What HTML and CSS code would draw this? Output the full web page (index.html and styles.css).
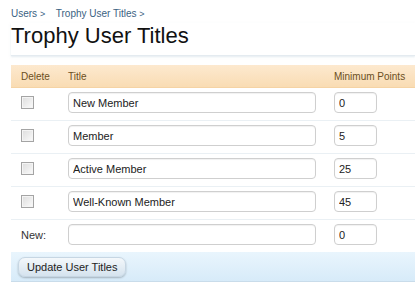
FILE: index.html
```html
<!DOCTYPE html>
<html lang="en">
<head>
    <meta charset="UTF-8">
    <meta name="viewport" content="width=device-width, initial-scale=1.0">
    <title>Trophy User Titles</title>
    <link rel="stylesheet" href="styles.css">
</head>
<body>
    <div class="page">
        <div class="breadcrumb">
            <a href="#">Users</a> <span class="sep">&gt;</span>
            <a href="#" class="crumb-last">Trophy User Titles</a> <span class="sep">&gt;</span>
        </div>
        <h1 class="title-bar">Trophy User Titles</h1>

        <form class="titles-form">
            <table class="data-table">
                <thead>
                    <tr>
                        <th class="col-delete">Delete</th>
                        <th class="col-title">Title</th>
                        <th class="col-points">Minimum Points</th>
                    </tr>
                </thead>
                <tbody>
                    <tr>
                        <td><input type="checkbox" class="check"></td>
                        <td><input type="text" class="text-input title-input" value="New Member"></td>
                        <td><input type="text" class="text-input points-input" value="0"></td>
                    </tr>
                    <tr>
                        <td><input type="checkbox" class="check"></td>
                        <td><input type="text" class="text-input title-input" value="Member"></td>
                        <td><input type="text" class="text-input points-input" value="5"></td>
                    </tr>
                    <tr>
                        <td><input type="checkbox" class="check"></td>
                        <td><input type="text" class="text-input title-input" value="Active Member"></td>
                        <td><input type="text" class="text-input points-input" value="25"></td>
                    </tr>
                    <tr>
                        <td><input type="checkbox" class="check"></td>
                        <td><input type="text" class="text-input title-input" value="Well-Known Member"></td>
                        <td><input type="text" class="text-input points-input" value="45"></td>
                    </tr>
                    <tr class="new-row">
                        <td class="new-label">New:</td>
                        <td><input type="text" class="text-input title-input" value=""></td>
                        <td><input type="text" class="text-input points-input" value="0"></td>
                    </tr>
                </tbody>
            </table>
            <div class="submit-unit">
                <button type="button" class="button">Update User Titles</button>
            </div>
        </form>
    </div>
</body>
</html>
```

FILE: styles.css
```css
/* Base */
body {
    margin: 0;
    padding: 0;
    background: #fff;
    font-family: "Liberation Sans", Arial, sans-serif;
    font-size: 11px;
    color: #222;
}
.page {
    padding: 7px 0 0 11px;
}
.breadcrumb {
    font-size: 10px;
    line-height: 14px;
    height: 14px;
    color: #3a6282;
}
.breadcrumb a {
    color: #3a6282;
    text-decoration: none;
}
.breadcrumb .sep {
    font-size: 9px;
    margin-right: 8px;
}
.title-bar {
    margin: 2px 0 0 0;
    padding: 0 0 6px 0;
    font-size: 22px;
    line-height: 26px;
    font-weight: normal;
    color: #111;
    border-bottom: 1px solid #e4ebf0;
    box-shadow: 0 1px 2px rgba(200, 215, 225, 0.5);
}

/* Table */
.titles-form {
    margin-top: 9px;
}
.data-table {
    width: 100%;
    border-collapse: collapse;
    table-layout: fixed;
}
.data-table th {
    height: 22px;
    padding: 0 0 0 10px;
    text-align: left;
    font-size: 10px;
    font-weight: normal;
    color: #6b4f22;
    background: linear-gradient(to bottom, #fde9cf, #f9dcb3);
    border-bottom: 1px solid #f5d3a4;
}
.col-delete {
    width: 37px;
}
.col-title {
    width: 256px;
}
.data-table td {
    padding: 4px 0 7px 10px;
    border-bottom: 1px solid #eaf0f4;
    vertical-align: middle;
}
.data-table tr.new-row td {
    border-bottom: none;
    padding-bottom: 7px;
}
.new-label {
    color: #333;
    font-size: 11px;
}
.check {
    appearance: none;
    -webkit-appearance: none;
    display: block;
    width: 13px;
    height: 13px;
    margin: 0;
    border: 1px solid #a4a4a4;
    background: linear-gradient(135deg, #dcdcdc, #fbfbfb);
    box-shadow: inset 0 0 0 1px #f4f4f4;
    box-sizing: border-box;
}
.text-input {
    display: block;
    box-sizing: border-box;
    height: 21px;
    margin: 0;
    padding: 0 4px;
    border: 1px solid #cfcfcf;
    border-radius: 4px;
    background: #fff;
    box-shadow: inset 0 1px 1px rgba(0, 0, 0, 0.06);
    font-family: "Liberation Sans", Arial, sans-serif;
    font-size: 11px;
    color: #222;
}
.title-input {
    width: 248px;
}
.points-input {
    width: 43px;
}

/* Footer */
.submit-unit {
    height: 24px;
    padding: 5px 0 0 7px;
    background: linear-gradient(to bottom, #e9f5fd, #d7ebf9);
    border-bottom: 1px solid #c9dcea;
}
.button {
    height: 20px;
    padding: 0 8px;
    border: 1px solid #c6d6e3;
    border-radius: 7px;
    background: linear-gradient(to bottom, #f4f8fb, #d5e3ee);
    box-shadow: 0 1px 2px rgba(0, 0, 0, 0.25);
    font-family: "Liberation Sans", Arial, sans-serif;
    font-size: 11px;
    color: #222;
    cursor: pointer;
}
```
